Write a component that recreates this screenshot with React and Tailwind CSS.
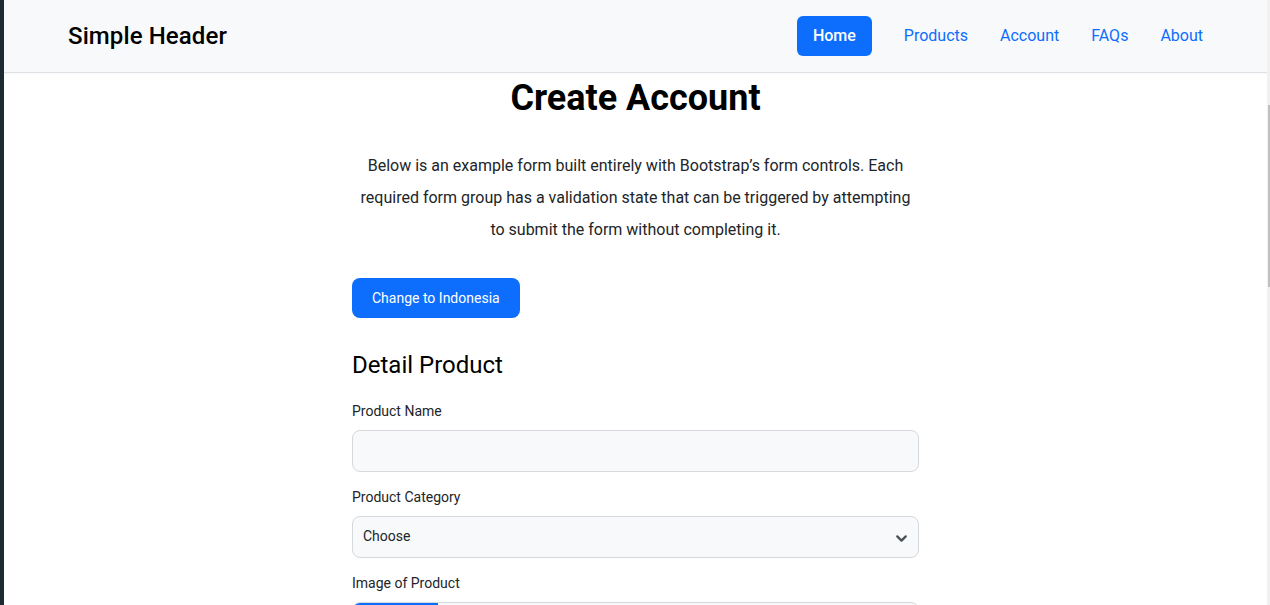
import { ChevronDown } from "lucide-react";

const links = ["Products", "Account", "FAQs", "About"];

const Field = ({ label, children, first }) => (
  <div className={first ? "" : "mt-[15px]"}>
    <label className="block text-sm leading-[21px] text-[#212529] mb-2">{label}</label>
    {children}
  </div>
);

const App = () => (
  <div className="flex h-screen overflow-hidden bg-white font-['Roboto',sans-serif] text-[#212529]">
    {/* editor strip on the left */}
    <div className="w-[4px] shrink-0 bg-[#1c2a33]" />

    <div className="flex-1 min-w-0 overflow-hidden">
      <header className="h-[73px] bg-[#f8f9fa] border-b border-[#dee2e6] shadow-[0_1px_2px_rgba(0,0,0,0.04)] flex items-center justify-between pl-[64px] pr-[48px]">
        <span className="text-2xl font-medium text-black tracking-[0.1px]">Simple Header</span>
        <nav className="flex items-center">
          <a className="h-10 px-4 mr-[16px] flex items-center rounded-md bg-[#0d6efd] text-white text-base font-medium">Home</a>
          {links.map((l) => (
            <a key={l} className="h-10 px-4 flex items-center text-base text-[#0d6efd]">{l}</a>
          ))}
        </nav>
      </header>

      <main className="w-[567px] ml-[348px]">
        <h1 className="text-center text-[36px] leading-[1.2] font-bold text-black mt-[4px]">Create Account</h1>
        <p className="text-center text-base leading-8 mt-[30px] text-[#212529]">
          Below is an example form built entirely with Bootstrap’s form controls. Each required form group has a validation state that can be triggered by attempting to submit the form without completing it.
        </p>

        <button className="mt-[32px] h-10 px-5 rounded-lg bg-[#0d6efd] text-white text-sm font-normal">
          Change to Indonesia
        </button>

        <h4 className="mt-[33px] text-2xl leading-[29px] text-black">Detail Product</h4>

        <div className="mt-[21px]">
          <Field label="Product Name" first>
            <input className="w-full h-[42px] rounded-lg border border-[#d5d8dc] bg-[#f8f9fa] px-3 text-sm outline-none" />
          </Field>
          <Field label="Product Category">
            <div className="w-full h-[42px] rounded-lg border border-[#d5d8dc] bg-[#f8f9fa] pl-[10px] pr-[8px] pb-[2px] flex items-center justify-between text-sm">
              <span>Choose</span>
              <ChevronDown size={17} strokeWidth={3.2} className="text-[#4a5056] mt-[4px]" />
            </div>
          </Field>
          <Field label="Image of Product">
            {/* file picker, only its top edge is in view */}
            <div className="w-full h-[42px] rounded-lg border border-[#d5d8dc] bg-[#f8f9fa] flex overflow-hidden">
              <div className="w-[85px] bg-[#0d6efd]" />
            </div>
          </Field>
        </div>
      </main>
    </div>

    {/* scrollbar */}
    <div className="w-[3px] shrink-0 bg-[#f1f1f1] flex flex-col">
      <div className="h-[105px]" />
      <div className="ml-[1px] w-[2px] h-[182px] bg-[#c1c1c1]" />
    </div>
  </div>
);

export default App;
